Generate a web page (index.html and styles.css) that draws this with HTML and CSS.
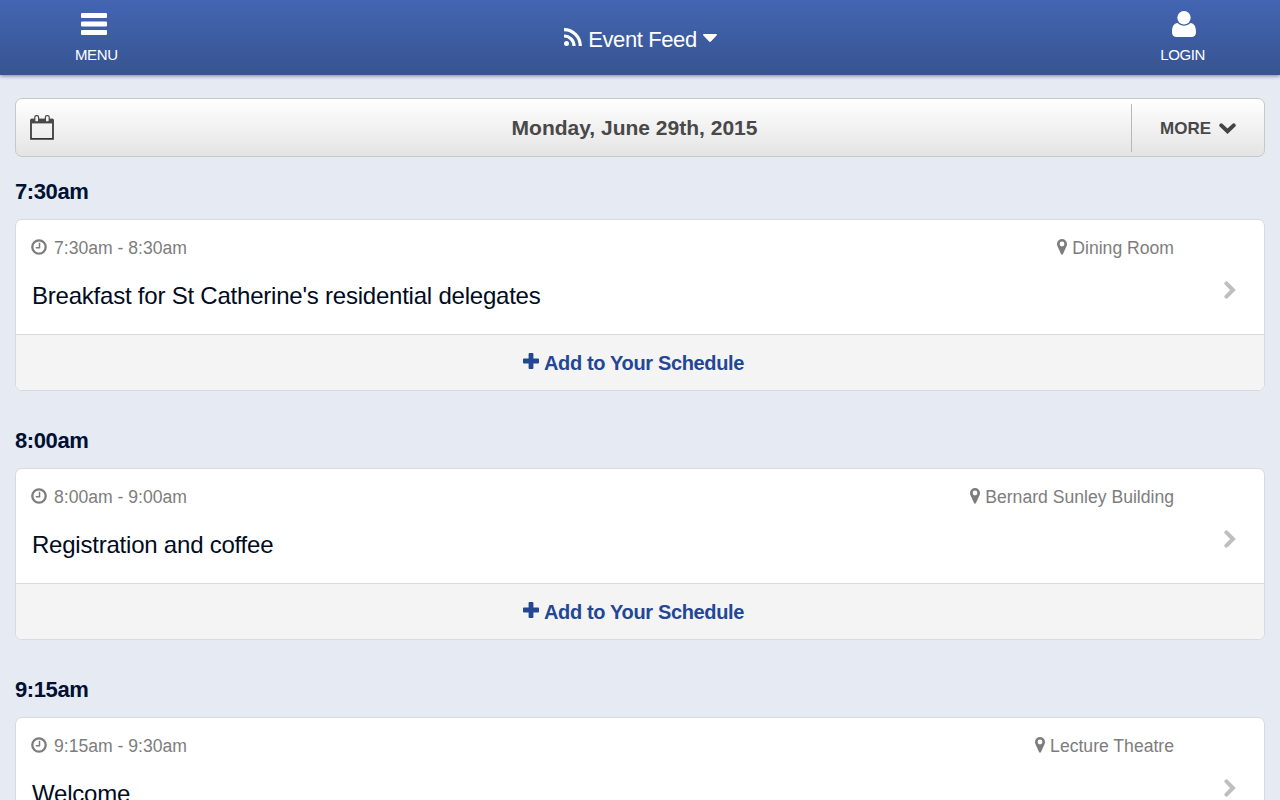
FILE: index.html
```html
<!DOCTYPE html>
<html lang="en">
<head>
    <meta charset="UTF-8">
    <meta name="viewport" content="width=device-width, initial-scale=1.0">
    <title>Event Feed</title>
    <link rel="stylesheet" href="styles.css">
</head>
<body>
    <svg class="sprite">
        <symbol id="clock" viewBox="0 0 16 16">
            <circle cx="8" cy="8" r="6.7" fill="none" stroke="currentColor" stroke-width="2.3"/>
            <path d="M8.500 3.800v5H4.800" fill="none" stroke="currentColor" stroke-width="1.5"/>
        </symbol>
        <symbol id="pin" viewBox="0 0 10 16">
            <path fill-rule="evenodd" d="M5 0A5 5 0 0 0 0 5Q0 6.300.5 7.300L4 15Q5 16.600 6 15L9.500 7.300Q10 6.300 10 5A5 5 0 0 0 5 0zM5 2.600A2.400 2.400 0 0 1 5 7.400A2.400 2.400 0 0 1 5 2.600z" fill="currentColor"/>
        </symbol>
        <symbol id="plus" viewBox="0 0 16 16">
            <path d="M6.500 0h3q.9 0 .9.900v4.700h4.700q.9 0 .9.900v3q0 .9-.9.900h-4.700v4.700q0 .9-.9.900h-3q-.9 0-.9-.9v-4.700H.9q-.9 0-.9-.9v-3q0-.9.900-.9h4.700V.9q0-.9.900-.9z" fill="currentColor"/>
        </symbol>
        <symbol id="chevron" viewBox="0 0 12 18">
            <path d="M2.400 2.400 9 9l-6.600 6.600" fill="none" stroke="currentColor" stroke-width="4" stroke-linecap="round"/>
        </symbol>
    </svg>

    <header class="navbar">
        <a class="nav-item">
            <svg class="menu-icon" viewBox="0 0 26 22" fill="#fff">
                <rect width="26" height="5" rx="1"/>
                <rect y="8.500" width="26" height="5" rx="1"/>
                <rect y="17" width="26" height="5" rx="1"/>
            </svg>
            <span>MENU</span>
        </a>
        <h1 class="nav-title">
            <svg class="feed-icon" viewBox="0 0 18 18" fill="none" stroke="#fff" stroke-width="3.200">
                <circle cx="2.500" cy="15.500" r="2.500" fill="#fff" stroke="none"/>
                <path d="M0 8A10 10 0 0 1 10 18M0 1.700A16.300 16.300 0 0 1 16.300 18"/>
            </svg>
            <span>Event Feed</span>
            <svg class="caret-icon" viewBox="0 0 14 8"><path d="M.8 0h12.400q1.200.3.400 1.400L7.900 7.500q-.9.800-1.800 0L.4 1.400Q-.4.300.8 0z" fill="#fff"/></svg>
        </h1>
        <a class="nav-item login">
            <svg class="user-icon" viewBox="0 0 24 26" fill="#fff">
                <path d="M5.500 12C2 12 0 15.500 0 21.200 0 24 1.700 26 4.500 26h15c2.800 0 4.500-2 4.500-4.800C24 15.500 22 12 18.500 12A9 9 0 0 1 5.500 12z"/>
                <circle cx="12" cy="6.700" r="6.700"/>
            </svg>
            <span>LOGIN</span>
        </a>
    </header>

    <main class="feed">
        <div class="date-bar">
            <svg class="calendar-icon" viewBox="0 0 24 25">
                <path d="M1 5h22v18.800H1z" fill="none" stroke="#333" stroke-width="1.700"/>
                <path d="M1 3.600h22v4.800H1z" fill="#484848"/>
                <rect x="4.800" y=".7" width="3.800" height="6.200" rx="1.500" fill="#f4f4f4" stroke="#484848" stroke-width="1.200"/>
                <rect x="15.400" y=".7" width="3.800" height="6.200" rx="1.500" fill="#f4f4f4" stroke="#484848" stroke-width="1.200"/>
            </svg>
            <h2 class="date">Monday, June 29th, 2015</h2>
            <a class="more">
                <span>MORE</span>
                <svg class="more-icon" viewBox="0 0 17 11"><path d="M2.300 2.400 8.500 8.200l6.200-5.800" fill="none" stroke="#444" stroke-width="4" stroke-linecap="round"/></svg>
            </a>
        </div>

        <h3 class="slot">7:30am</h3>
        <article class="card">
            <div class="card-body">
                <div class="info">
                    <div class="meta">
                        <svg class="clock-icon"><use href="#clock"/></svg>
                        <span>7:30am - 8:30am</span>
                        <svg class="pin-icon"><use href="#pin"/></svg>
                        <span>Dining Room</span>
                    </div>
                    <h4 class="title">Breakfast for St Catherine's residential delegates</h4>
                </div>
                <svg class="chevron-icon"><use href="#chevron"/></svg>
            </div>
            <a class="add">
                <svg class="plus-icon"><use href="#plus"/></svg>
                <span>Add to Your Schedule</span>
            </a>
        </article>

        <h3 class="slot">8:00am</h3>
        <article class="card">
            <div class="card-body">
                <div class="info">
                    <div class="meta">
                        <svg class="clock-icon"><use href="#clock"/></svg>
                        <span>8:00am - 9:00am</span>
                        <svg class="pin-icon"><use href="#pin"/></svg>
                        <span>Bernard Sunley Building</span>
                    </div>
                    <h4 class="title">Registration and coffee</h4>
                </div>
                <svg class="chevron-icon"><use href="#chevron"/></svg>
            </div>
            <a class="add">
                <svg class="plus-icon"><use href="#plus"/></svg>
                <span>Add to Your Schedule</span>
            </a>
        </article>

        <h3 class="slot">9:15am</h3>
        <article class="card">
            <div class="card-body">
                <div class="info">
                    <div class="meta">
                        <svg class="clock-icon"><use href="#clock"/></svg>
                        <span>9:15am - 9:30am</span>
                        <svg class="pin-icon"><use href="#pin"/></svg>
                        <span>Lecture Theatre</span>
                    </div>
                    <h4 class="title">Welcome</h4>
                </div>
                <svg class="chevron-icon"><use href="#chevron"/></svg>
            </div>
        </article>
    </main>
</body>
</html>
```
FILE: styles.css
```css
* {
    margin: 0;
    padding: 0;
    box-sizing: border-box;
}

body {
    height: 100vh;
    overflow: hidden;
    background-color: #e6eaf2;
    font-family: "Helvetica Neue", "Liberation Sans", Arial, sans-serif;
    color: #001133;
}

svg {
    display: block;
    flex: none;
}

.sprite {
    display: none;
}

span, h1, h2, h3, h4 {
    white-space: nowrap;
}

.navbar {
    height: 75px;
    padding: 0 75px;
    display: grid;
    grid-template-columns: 1fr auto 1fr;
    background: linear-gradient(#4365b2, #375491);
    box-shadow: 0 1px 4px rgba(0, 0, 0, 0.45);
    color: #fff;
}

.nav-item {
    justify-self: start;
    padding-top: 13px;
    font-size: 15px;
    line-height: 18px;
    letter-spacing: -0.4px;
}

.menu-icon {
    width: 26px;
    height: 22px;
    margin: 0 0 11px 6px;
}

.login {
    justify-self: end;
    padding-top: 11px;
}

.user-icon {
    width: 24px;
    height: 26px;
    margin: 0 0 9px 12px;
}

.nav-title {
    display: flex;
    align-items: center;
    padding-top: 4px;
    font-size: 22px;
    font-weight: normal;
    letter-spacing: -0.4px;
}

.feed-icon {
    width: 18px;
    height: 18px;
    margin: 0 6px 5px 0;
}

.caret-icon {
    width: 14px;
    height: 8px;
    margin: 0 -1px 4px 6px;
}

.feed {
    padding: 23px 15px 0;
}

.date-bar {
    height: 59px;
    padding-left: 14px;
    display: flex;
    align-items: center;
    border: 1px solid #c8c8c8;
    border-radius: 7px;
    background: linear-gradient(#fff, #e4e4e4);
    color: #484848;
}

.calendar-icon {
    width: 24px;
    height: 25px;
}

.date {
    flex: 1;
    padding: 1px 0 0 84px;
    text-align: center;
    font-size: 21px;
}

.more {
    width: 133px;
    height: 48px;
    display: flex;
    align-items: center;
    padding: 2px 0 0 28px;
    border-left: 1px solid #b8b8b8;
    font-size: 17px;
    font-weight: bold;
}

.more-icon {
    width: 17px;
    height: 11px;
    margin: 0 0 1px 8px;
}

.slot {
    height: 62px;
    padding-top: 22px;
    font-size: 22px;
    line-height: 26px;
    letter-spacing: -0.4px;
}

.card + .slot {
    height: 77px;
    padding-top: 37px;
}

.card {
    border: 1px solid #d9dade;
    border-radius: 7px;
    background-color: #fff;
    overflow: hidden;
}

.card-body {
    height: 114px;
    padding: 17px 27px 0 15px;
    display: flex;
}

.info {
    flex: 1;
    padding-right: 51px;
}

.meta {
    display: flex;
    align-items: center;
    font-size: 17.6px;
    line-height: 22px;
    color: #7d7d7d;
}

.clock-icon {
    width: 16px;
    height: 16px;
    margin: 0 7px 3px 0;
}

.pin-icon {
    width: 10px;
    height: 16px;
    margin: 0 5px 3px auto;
}

.title {
    margin: 23px 0 0 1px;
    font-size: 24px;
    font-weight: normal;
    line-height: 28px;
    letter-spacing: -0.22px;
    color: #000b22;
}

.chevron-icon {
    width: 12px;
    height: 18px;
    margin: 44px 1px 0 -1px;
    color: #bfbfbf;
}

.add {
    height: 56px;
    display: flex;
    align-items: center;
    justify-content: center;
    padding: 2px 13px 0 0;
    border-top: 1px solid #d9d9d9;
    background-color: #f4f4f4;
    color: #244794;
    font-size: 20px;
    font-weight: bold;
    letter-spacing: -0.35px;
}

.plus-icon {
    width: 16px;
    height: 16px;
    margin: 0 5px 5px 0;
}
```
